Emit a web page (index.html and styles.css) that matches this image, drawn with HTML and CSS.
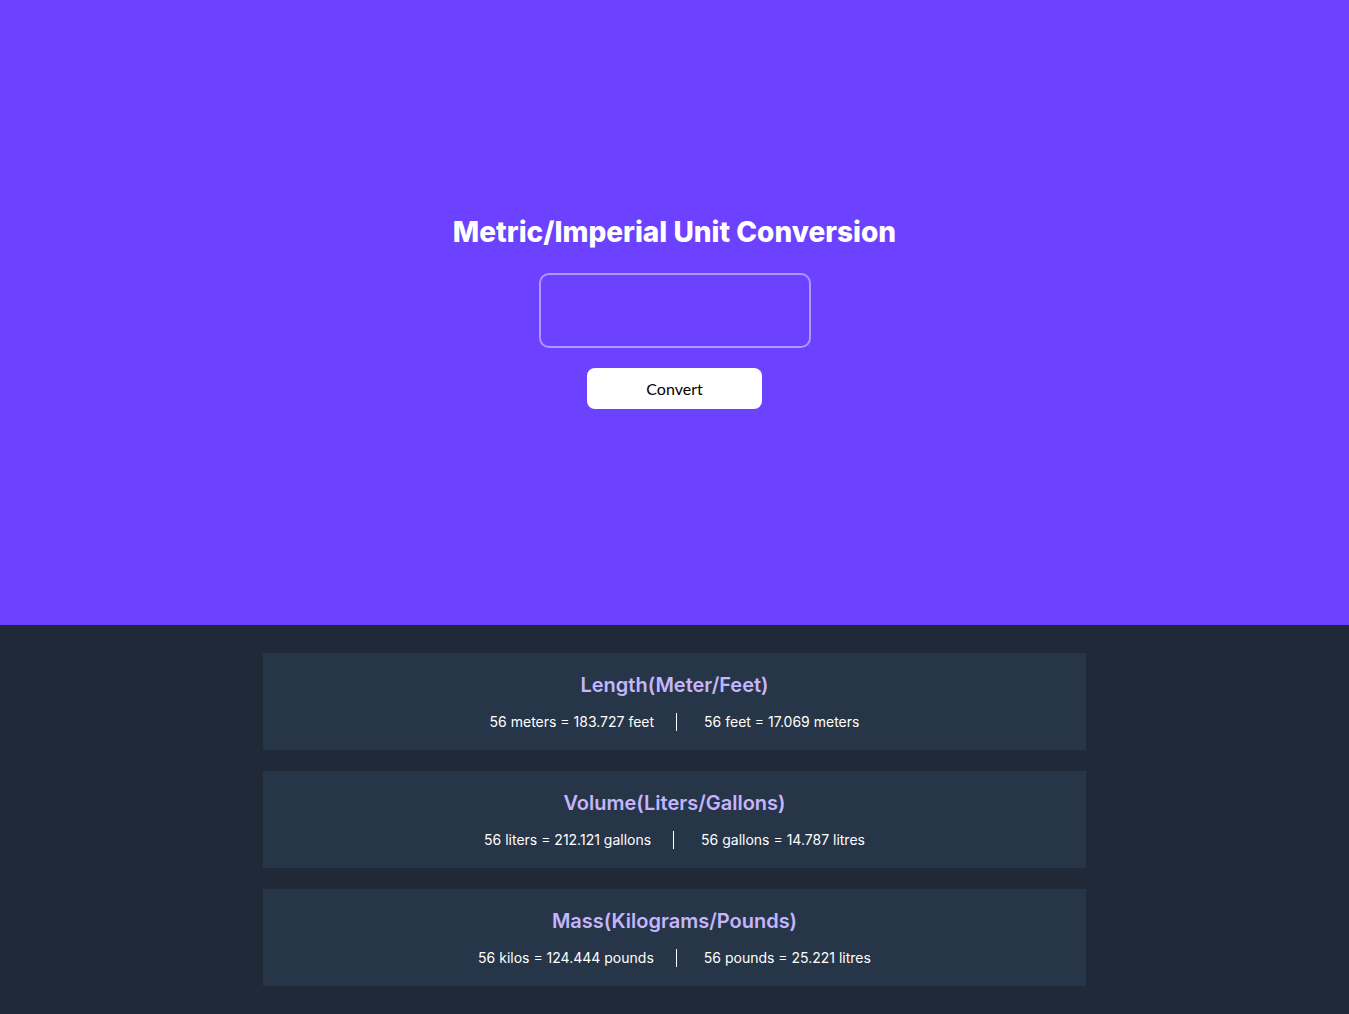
FILE: index.html
```html
<!DOCTYPE html>
<html>
<head>
<meta charset="utf-8">
<link rel="stylesheet" href="styles.css">
</head>
<body>
<header class="hero">
  <h1 class="hero-title">Metric/Imperial Unit Conversion</h1>
  <input class="hero-input" type="text">
  <button class="hero-btn">Convert</button>
</header>
<main class="results">
  <section class="card">
    <h2 class="card-title">Length(Meter/Feet)</h2>
    <p class="card-row"><span class="cell cell-l">56 meters = 183.727 feet</span><span class="sep"></span><span class="cell cell-r">56 feet = 17.069 meters</span></p>
  </section>
  <section class="card">
    <h2 class="card-title">Volume(Liters/Gallons)</h2>
    <p class="card-row"><span class="cell cell-l">56 liters = 212.121 gallons</span><span class="sep"></span><span class="cell cell-r">56 gallons = 14.787 litres</span></p>
  </section>
  <section class="card">
    <h2 class="card-title">Mass(Kilograms/Pounds)</h2>
    <p class="card-row"><span class="cell cell-l">56 kilos = 124.444 pounds</span><span class="sep"></span><span class="cell cell-r">56 pounds = 25.221 litres</span></p>
  </section>
</main>
</body>
</html>
```
FILE: styles.css
```css
* { box-sizing: border-box; }
html, body { margin: 0; padding: 0; }
body {
  font-family: Inter, "Noto Sans", sans-serif;
  background: #1f2937;
  color: #fff;
}
.hero {
  height: 625px;
  background: #6c41ff;
  display: flex;
  flex-direction: column;
  align-items: center;
  justify-content: center;
}
.hero-title {
  margin: -1px 0 25px;
  font-size: 28px;
  font-weight: 800;
  line-height: 32px;
  color: #fff;
}
.hero-input {
  width: 272px;
  height: 75px;
  background: transparent;
  border: 2px solid rgba(255,255,255,0.45);
  border-radius: 10px;
  outline: none;
  color: #fff;
  font-size: 20px;
  padding: 0 12px;
}
.hero-btn {
  margin-top: 20px;
  width: 175px;
  height: 41px;
  background: #fff;
  border: none;
  border-radius: 8px;
  font-family: Lato, sans-serif;
  font-size: 16px;
  color: #000;
}
.results {
  width: 823px;
  margin: 0 auto;
  padding: 28px 0;
  display: flex;
  flex-direction: column;
  gap: 21px;
}
.card {
  background: #263547;
  height: 97px;
  display: flex;
  flex-direction: column;
  align-items: center;
  padding-top: 18px;
}
.card-title {
  margin: 0 0 13px;
  font-size: 20px;
  font-weight: 600;
  line-height: 28px;
  color: #c4b5fd;
}
.card-row {
  margin: 0;
  display: flex;
  align-items: center;
  font-size: 14px;
  line-height: 20px;
}
.cell-l { padding: 0 22px 0 0; }
.cell-r { padding: 0 0 0 27px; }
.sep {
  width: 1px;
  height: 18px;
  background: #fff;
}
```
